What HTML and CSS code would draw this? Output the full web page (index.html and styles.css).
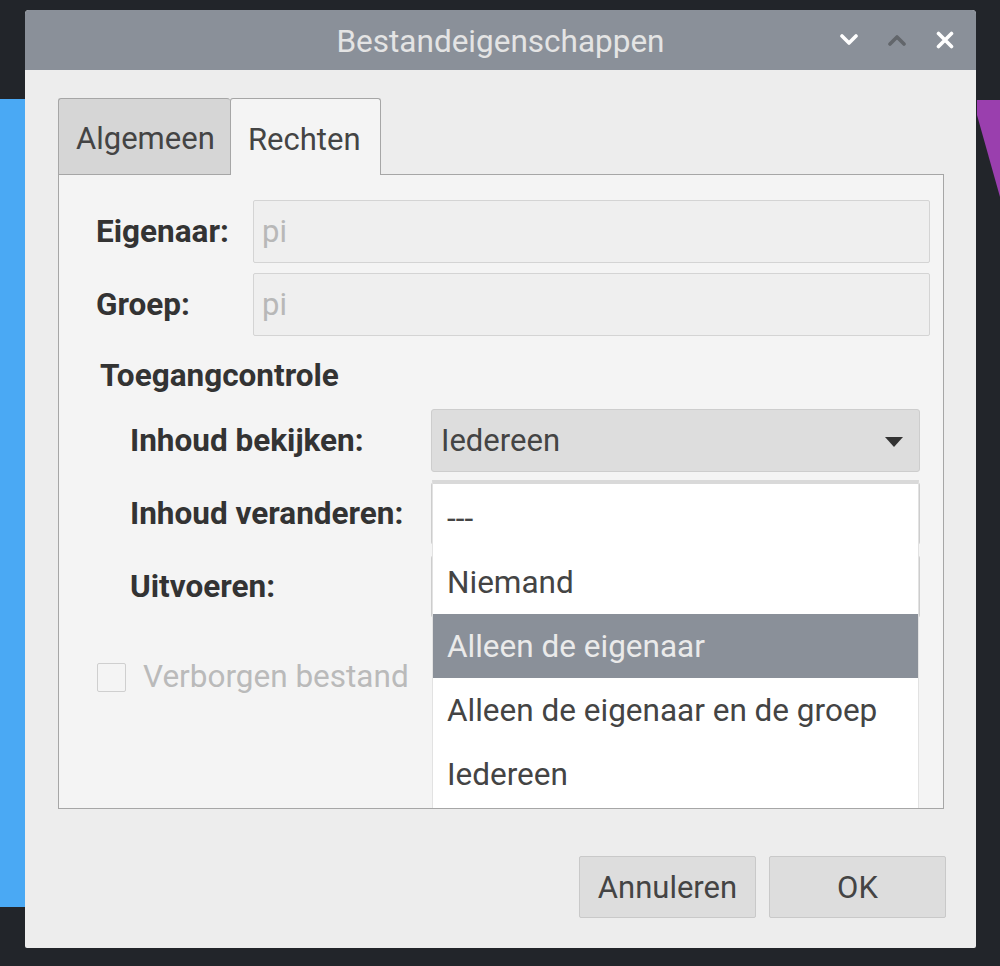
FILE: index.html
```html
<!DOCTYPE html>
<html lang="nl">
<head>
<meta charset="utf-8">
<title>Bestandeigenschappen</title>
<link rel="stylesheet" href="styles.css">
</head>
<body>
<div class="desktop">
  <div class="wall-blue"></div>
  <svg class="wall-purple" width="23" height="100" viewBox="0 0 23 100"><polygon points="0,0 23,0 23,97 0,15" fill="#9a3fae"/></svg>

  <div class="dialog">
    <div class="titlebar">
      <div class="title">Bestandeigenschappen</div>
      <div class="wm-buttons">
        <svg class="wm-icon" width="18" height="12" viewBox="0 0 18 12"><path d="M2 2 L9 9 L16 2" fill="none" stroke="#ffffff" stroke-width="3.6" stroke-linecap="round" stroke-linejoin="round"/></svg>
        <svg class="wm-icon" width="18" height="12" viewBox="0 0 18 12"><path d="M2 10 L9 3 L16 10" fill="none" stroke="#62666b" stroke-width="3.6" stroke-linecap="round" stroke-linejoin="round"/></svg>
        <svg class="wm-icon" width="18" height="18" viewBox="0 0 18 18"><path d="M2.5 2.5 L15.5 15.5 M15.5 2.5 L2.5 15.5" fill="none" stroke="#ffffff" stroke-width="3.6" stroke-linecap="round"/></svg>
      </div>
    </div>

    <div class="content">
      <div class="notebook">
        <div class="tabs">
          <div class="tab">Algemeen</div>
          <div class="tab tab-active">Rechten</div>
          <div class="tab-fill"></div>
        </div>
        <div class="panel">
          <div class="owner-grid">
            <div class="label">Eigenaar:</div>
            <div class="entry">pi</div>
            <div class="label">Groep:</div>
            <div class="entry">pi</div>
          </div>
          <div class="heading">Toegangcontrole</div>
          <div class="access-grid">
            <div class="label">Inhoud bekijken:</div>
            <div class="combo"><span>Iedereen</span><svg width="18" height="11" viewBox="0 0 18 11"><polygon points="0,0 18,0 9,10" fill="#333333"/></svg></div>
            <div class="label">Inhoud veranderen:</div>
            <div class="combo"></div>
            <div class="label">Uitvoeren:</div>
            <div class="combo"></div>
          </div>
          <div class="check-row">
            <div class="checkbox"></div>
            <div class="check-label">Verborgen bestand</div>
          </div>
        </div>
      </div>

      <div class="button-row">
        <div class="button">Annuleren</div>
        <div class="button">OK</div>
      </div>
    </div>

    <div class="popup">
      <div class="item">---</div>
      <div class="item">Niemand</div>
      <div class="item item-selected">Alleen de eigenaar</div>
      <div class="item">Alleen de eigenaar en de groep</div>
      <div class="item">Iedereen</div>
    </div>
  </div>
</div>
</body>
</html>
```

FILE: styles.css
```css
html, body {
  margin: 0;
  padding: 0;
}
body {
  width: 1000px;
  height: 966px;
  overflow: hidden;
  background: #22252a;
  font-family: Roboto, "Noto Sans", "Liberation Sans", sans-serif;
}
.desktop {
  position: relative;
  width: 1000px;
  height: 966px;
}
.wall-blue {
  position: absolute;
  left: 0;
  top: 99px;
  width: 26px;
  height: 808px;
  background: #4aa9f4;
}
.wall-purple {
  position: absolute;
  left: 977px;
  top: 100px;
}
.dialog {
  position: absolute;
  left: 25px;
  top: 10px;
  width: 951px;
  height: 938px;
  background: #ededed;
  border-radius: 4px 4px 2px 2px;
  display: flex;
  flex-direction: column;
  overflow: hidden;
}
.titlebar {
  height: 60px;
  flex: none;
  background: #8a9099;
  display: flex;
  align-items: center;
  justify-content: center;
  position: relative;
}
.title {
  color: #e4e4e4;
  font-size: 31.5px;
  font-weight: 400;
  margin-top: 2px;
}
.wm-buttons {
  position: absolute;
  right: 22px;
  top: 0;
  height: 60px;
  display: flex;
  align-items: center;
  gap: 30px;
}
.content {
  flex: 1;
  display: flex;
  flex-direction: column;
  padding: 28px 30px 30px 33px;
}
.notebook {
  width: 886px;
  display: flex;
  flex-direction: column;
}
.tabs {
  display: flex;
  height: 77px;
}
.tab {
  box-sizing: border-box;
  height: 77px;
  padding: 0 17px;
  display: flex;
  align-items: center;
  font-size: 31px;
  color: #444444;
  background: #d6d6d6;
  border: 1.5px solid #a6a6a6;
  border-bottom: none;
  border-radius: 3px 3px 0 0;
}
.tab:first-child {
  width: 172px;
  border-right: none;
  border-bottom: 1.5px solid #a6a6a6;
  padding-top: 4px;
}
.tab-active {
  width: 151px;
  background: #f4f4f4;
  padding-top: 4px;
}
.tab-fill {
  flex: 1;
  border-bottom: 1.5px solid #a6a6a6;
}
.panel {
  box-sizing: border-box;
  height: 634px;
  background: #f4f4f4;
  border: 1.5px solid #a6a6a6;
  border-top: none;
  padding: 25px 13px 0 37px;
  color: #333333;
}
.owner-grid {
  display: grid;
  grid-template-columns: 157px 1fr;
  row-gap: 10px;
}
.label {
  font-size: 31.5px;
  font-weight: 700;
  color: #333333;
  display: flex;
  align-items: center;
  white-space: nowrap;
}
.entry {
  box-sizing: border-box;
  height: 63px;
  border: 1.5px solid #d4d4d4;
  border-radius: 2px;
  background: #efefef;
  color: #b8b8b8;
  font-size: 31px;
  display: flex;
  align-items: center;
  padding-left: 8px;
}
.heading {
  font-size: 31.5px;
  font-weight: 700;
  color: #333333;
  margin: 20px 0 0 4px;
  line-height: 40px;
}
.access-grid {
  display: grid;
  grid-template-columns: 301px 489px;
  row-gap: 10px;
  margin: 13px 0 0 34px;
}
.combo {
  box-sizing: border-box;
  height: 63px;
  border: 1.5px solid #cdcdcd;
  border-radius: 3px;
  background: #dddddd;
  display: flex;
  align-items: center;
  justify-content: space-between;
  padding: 0 16px 0 9px;
  font-size: 31px;
  color: #444444;
}
.combo svg {
  margin-top: 4px;
}
.check-row {
  display: flex;
  align-items: center;
  margin: 40px 0 0 1px;
  gap: 17px;
}
.checkbox {
  box-sizing: border-box;
  width: 29px;
  height: 29px;
  border: 1.5px solid #cfcfcf;
  border-radius: 2px;
  background: #f4f4f4;
  margin-top: 2px;
}
.check-label {
  font-size: 31.5px;
  color: #bababa;
}
.button-row {
  margin-top: auto;
  display: flex;
  justify-content: flex-end;
  gap: 13px;
}
.button {
  box-sizing: border-box;
  width: 177px;
  height: 62px;
  background: #dddddd;
  border: 1.5px solid #c9c9c9;
  border-radius: 2px;
  display: flex;
  align-items: center;
  justify-content: center;
  font-size: 31px;
  color: #444444;
}
.popup {
  position: absolute;
  left: 407px;
  top: 470px;
  width: 487px;
  height: 328px;
  box-sizing: border-box;
  background: #ffffff;
  border-top: 4px solid #d9d9d9;
  border-left: 1px solid #e2e2e2;
  border-right: 1px solid #e2e2e2;
  padding-top: 2px;
}
.item {
  height: 64px;
  display: flex;
  align-items: center;
  padding-left: 14px;
  font-size: 31.5px;
  color: #444444;
}
.item-selected {
  background: #8a9099;
  color: #eaeaea;
}
```
